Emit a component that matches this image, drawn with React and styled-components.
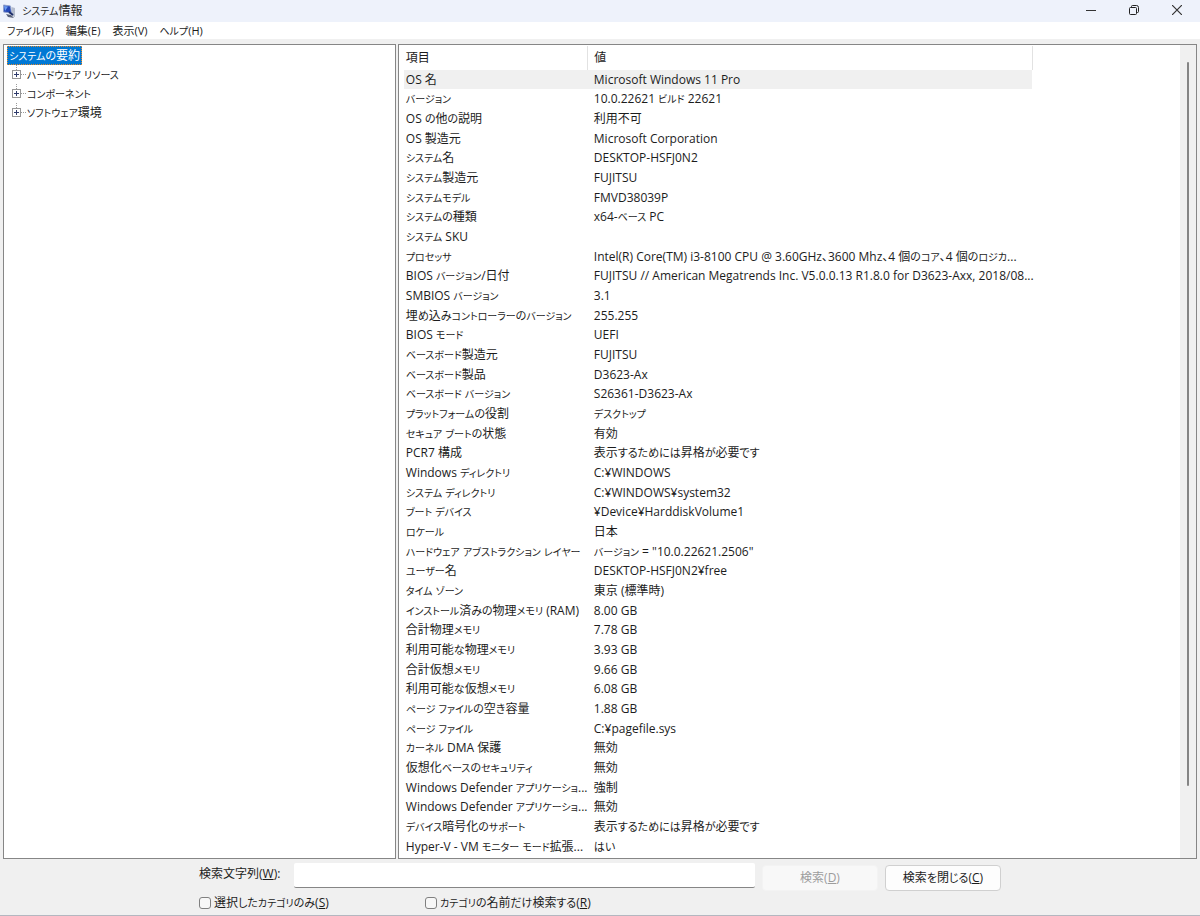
import React, { useState } from 'react';
import styled, { createGlobalStyle } from 'styled-components';

const menus = ['ファイル(F)', '編集(E)', '表示(V)', 'ヘルプ(H)'];

const categories = ['ハードウェア リソース', 'コンポーネント', 'ソフトウェア環境'];

const items = [
  ['OS 名', 'Microsoft Windows 11 Pro'],
  ['バージョン', '10.0.22621 ビルド 22621'],
  ['OS の他の説明', '利用不可'],
  ['OS 製造元', 'Microsoft Corporation'],
  ['システム名', 'DESKTOP-HSFJ0N2'],
  ['システム製造元', 'FUJITSU'],
  ['システムモデル', 'FMVD38039P'],
  ['システムの種類', 'x64-ベース PC'],
  ['システム SKU', ''],
  ['プロセッサ', 'Intel(R) Core(TM) i3-8100 CPU @ 3.60GHz、3600 Mhz、4 個のコア、4 個のロジカ...'],
  ['BIOS バージョン/日付', 'FUJITSU // American Megatrends Inc. V5.0.0.13 R1.8.0 for D3623-Axx, 2018/08...'],
  ['SMBIOS バージョン', '3.1'],
  ['埋め込みコントローラーのバージョン', '255.255'],
  ['BIOS モード', 'UEFI'],
  ['ベースボード製造元', 'FUJITSU'],
  ['ベースボード製品', 'D3623-Ax'],
  ['ベースボード バージョン', 'S26361-D3623-Ax'],
  ['プラットフォームの役割', 'デスクトップ'],
  ['セキュア ブートの状態', '有効'],
  ['PCR7 構成', '表示するためには昇格が必要です'],
  ['Windows ディレクトリ', 'C:¥WINDOWS'],
  ['システム ディレクトリ', 'C:¥WINDOWS¥system32'],
  ['ブート デバイス', '¥Device¥HarddiskVolume1'],
  ['ロケール', '日本'],
  ['ハードウェア アブストラクション レイヤー', 'バージョン = "10.0.22621.2506"'],
  ['ユーザー名', 'DESKTOP-HSFJ0N2¥free'],
  ['タイム ゾーン', '東京 (標準時)'],
  ['インストール済みの物理メモリ (RAM)', '8.00 GB'],
  ['合計物理メモリ', '7.78 GB'],
  ['利用可能な物理メモリ', '3.93 GB'],
  ['合計仮想メモリ', '9.66 GB'],
  ['利用可能な仮想メモリ', '6.08 GB'],
  ['ページ ファイルの空き容量', '1.88 GB'],
  ['ページ ファイル', 'C:¥pagefile.sys'],
  ['カーネル DMA 保護', '無効'],
  ['仮想化ベースのセキュリティ', '無効'],
  ['Windows Defender アプリケーショ...', '強制'],
  ['Windows Defender アプリケーショ...', '無効'],
  ['デバイス暗号化のサポート', '表示するためには昇格が必要です'],
  ['Hyper-V - VM モニター モード拡張...', 'はい'],
];

const GlobalStyle = createGlobalStyle`
  * {
    box-sizing: border-box;
  }

  body {
    margin: 0;
    color: #1c1c1c;
    background: #f0f0f0;
  }

  body, button, input {
    font-family: "Open Sans", "Noto Sans CJK JP", sans-serif;
    font-size: 12px;
    line-height: 16px;
    font-feature-settings: "palt";
  }
`;

const Kana = styled.span`
  font-size: ${({ $small }) => ($small ? '10px' : '11px')};
`;

const Window = styled.div`
  display: flex;
  flex-direction: column;
  height: 100vh;
  border-bottom: 1px solid #b4b7c0;
`;

const TitleBar = styled.header`
  display: flex;
  justify-content: space-between;
  height: 22px;
  padding: 0 2px;
  background: #eef2fb;
`;

const Title = styled.h1`
  display: flex;
  align-items: center;
  gap: 5px;
  margin: 0;
  font-size: 12px;
  font-weight: 400;
`;

const WindowButtons = styled.div`
  display: flex;
`;

const WindowButton = styled.button`
  display: flex;
  align-items: center;
  justify-content: center;
  width: 43px;
  height: 20px;
  padding: 0;
  border: 0;
  background: transparent;
`;

const MenuBar = styled.nav`
  display: flex;
  height: 17px;
  padding-left: 1px;
  background: #fff;
`;

const MenuButton = styled.button`
  padding: 0 6px;
  border: 0;
  color: inherit;
  background: transparent;
  font-size: 11px;
`;

const Panes = styled.main`
  display: flex;
  flex: 1;
  gap: 2px;
  min-height: 0;
  padding: 5px 3px 0;
`;

const Pane = styled.section`
  display: flex;
  flex: ${({ $basis }) => ($basis ? `0 0 ${$basis}` : '1')};
  min-width: 0;
  overflow: hidden;
  border: 1px solid #868686;
  background: #fff;
`;

const Tree = styled.div`
  padding: 1px 3px;
`;

const TreeRoot = styled.button`
  display: block;
  height: 19px;
  padding: 0 1px;
  border: 1px dotted #e58a2c;
  color: #fff;
  background: #0078d4;
`;

const TreeList = styled.ul`
  margin: 0;
  padding: 0 0 0 4px;
  list-style: none;
`;

const TreeItem = styled.li`
  display: flex;
  align-items: center;
  height: 19px;
`;

const TreeLabel = styled.button`
  padding: 0 1px;
  border: 0;
  color: inherit;
  background: transparent;
`;

const List = styled.div`
  flex: 1;
  min-width: 0;
  overflow: hidden;
  padding: 1px 0 0 5px;
`;

const Table = styled.table`
  width: 629px;
  table-layout: fixed;
  border-collapse: collapse;
`;

const HeadCell = styled.th`
  width: ${({ $width }) => $width};
  height: 24px;
  padding: 0 0 0 ${({ $first }) => ($first ? '2px' : '6px')};
  border-right: 1px solid #e2e2e2;
  font-weight: 400;
  text-align: left;
`;

const Row = styled.tr`
  height: 20px;
  background: ${({ $selected }) => ($selected ? '#f0f0f0' : 'transparent')};

  &:nth-child(3n + 1) {
    height: 19px;
  }
`;

const Cell = styled.td`
  padding: 0 0 0 ${({ $first }) => ($first ? '2px' : '6px')};
  line-height: 18px;
  white-space: nowrap;
`;

const ScrollBar = styled.div`
  display: flex;
  justify-content: center;
  width: 16px;
  padding-top: 17px;
  background: #f0f0f0;
`;

const Thumb = styled.div`
  width: 2px;
  height: 91%;
  border-radius: 1px;
  background: #858585;
`;

const SearchForm = styled.form`
  display: grid;
  gap: 4px;
  width: 100%;
  max-width: 802px;
  margin: 0 auto;
  padding: 4px 0;
`;

const SearchRow = styled.div`
  display: flex;
  align-items: flex-start;
`;

const SearchLabel = styled.label`
  width: 95px;
  padding-top: 3px;
`;

const SearchInput = styled.input`
  flex: 1;
  min-width: 0;
  height: 25px;
  margin-right: 7px;
  padding: 0 6px;
  border: 0;
  border-bottom: 1px solid #868686;
  border-radius: 2px;
  background: #fff;
`;

const FormButton = styled.button`
  width: 116px;
  height: 26px;
  margin: 2px 0 0;
  border: 1px solid #d0d0d0;
  border-radius: 4px;
  color: #1c1c1c;
  background: #fdfdfd;

  &:disabled {
    margin-right: 7px;
    border-color: #f3f3f3;
    color: #9d9d9d;
    background: #f8f8f8;
  }
`;

const CheckRow = styled.div`
  display: flex;
`;

const CheckLabel = styled.label`
  display: flex;
  align-items: center;
  gap: 3px;
  width: 226px;
  white-space: nowrap;
`;

const CheckBox = styled.input`
  appearance: none;
  width: 12px;
  height: 12px;
  margin: 0;
  border: 1px solid #808080;
  border-radius: 3px;
  background: #f7f7f7;

  &:checked {
    background: #0078d4;
  }
`;

// UI text sets kana narrower than kanji, katakana most of all
const UiText = ({ children }) => (
  <span>
    {children.split(/([ァ-ヶー]+|[ぁ-ん]+)/).map((part, index) => {
      if (index % 2 === 0) return part;
      return <Kana key={index} $small={/^[ァ-ヶー]/.test(part)}>{part}</Kana>;
    })}
  </span>
);

const AppIcon = () => (
  <svg width="15" height="15" viewBox="0 0 15 15" aria-hidden="true">
    <path d="M1.500 1l7 1 1 7-8-1z" fill="#2447b8" stroke="#8fa0cc" />
    <path d="M2 2l4 .5L3 7z" fill="#6c9bf0" />
    <path d="M9.500 3l3.500 1v9l-3-1z" fill="#b4bccd" />
    <path d="M4 10l5 1 3 3-6-1z" fill="#59627b" />
    <path d="M7 8l4 3" stroke="#1d2d69" strokeWidth="2" />
  </svg>
);

const Expander = () => (
  <svg width="15" height="19" viewBox="0 0 15 19" aria-hidden="true">
    <path d="M5.500 0v10M10 9.500h5" stroke="#9a9a9a" strokeDasharray="1 1" />
    <rect x="1.500" y="5.500" width="8" height="8" fill="#fff" stroke="#969696" />
    <path d="M3 9.500h5M5.500 7v5" stroke="#303c6c" />
  </svg>
);

const App = () => {
  const [query, setQuery] = useState('');

  return (
    <>
      <GlobalStyle />
      <Window>
        <TitleBar>
          <Title>
            <AppIcon />
            <UiText>システム情報</UiText>
          </Title>
          <WindowButtons>
            <WindowButton aria-label="最小化">
              <svg width="10" height="10"><path d="M0 5.500h10" stroke="#333" /></svg>
            </WindowButton>
            <WindowButton aria-label="元に戻す">
              <svg width="10" height="10" fill="none" stroke="#222">
                <rect x=".5" y="2.500" width="7" height="7" rx="1" />
                <path d="M2.500 2V1.500q0-1 1-1h4q2 0 2 2v4q0 1-1 1H8" />
              </svg>
            </WindowButton>
            <WindowButton aria-label="閉じる">
              <svg width="10" height="10"><path d="M0 0l10 10M10 0L0 10" stroke="#333" strokeWidth="1.200" /></svg>
            </WindowButton>
          </WindowButtons>
        </TitleBar>
        <MenuBar>
          {menus.map((menu) => (
            <MenuButton key={menu}><UiText>{menu}</UiText></MenuButton>
          ))}
        </MenuBar>
        <Panes>
          <Pane $basis="32.9%">
            <Tree>
              <TreeRoot><UiText>システムの要約</UiText></TreeRoot>
              <TreeList>
                {categories.map((category) => (
                  <TreeItem key={category}>
                    <Expander />
                    <TreeLabel><UiText>{category}</UiText></TreeLabel>
                  </TreeItem>
                ))}
              </TreeList>
            </Tree>
          </Pane>
          <Pane>
            <List>
              <Table>
                <thead>
                  <tr>
                    <HeadCell $first $width="184px">項目</HeadCell>
                    <HeadCell>値</HeadCell>
                  </tr>
                </thead>
                <tbody>
                  {items.map(([name, value], index) => (
                    <Row key={index} $selected={index === 0}>
                      <Cell $first><UiText>{name}</UiText></Cell>
                      <Cell><UiText>{value}</UiText></Cell>
                    </Row>
                  ))}
                </tbody>
              </Table>
            </List>
            <ScrollBar>
              <Thumb />
            </ScrollBar>
          </Pane>
        </Panes>
        <SearchForm onSubmit={(e) => e.preventDefault()}>
          <SearchRow>
            <SearchLabel htmlFor="query">検索文字列(<u>W</u>):</SearchLabel>
            <SearchInput id="query" value={query} onChange={(e) => setQuery(e.target.value)} />
            <FormButton disabled={!query}>検索(<u>D</u>)</FormButton>
            <FormButton type="button"><UiText>検索を閉じる</UiText>(<u>C</u>)</FormButton>
          </SearchRow>
          <CheckRow>
            <CheckLabel>
              <CheckBox type="checkbox" />
              <span><UiText>選択したカテゴリのみ</UiText>(<u>S</u>)</span>
            </CheckLabel>
            <CheckLabel>
              <CheckBox type="checkbox" />
              <span><UiText>カテゴリの名前だけ検索する</UiText>(<u>R</u>)</span>
            </CheckLabel>
          </CheckRow>
        </SearchForm>
      </Window>
    </>
  );
};

export default App;
